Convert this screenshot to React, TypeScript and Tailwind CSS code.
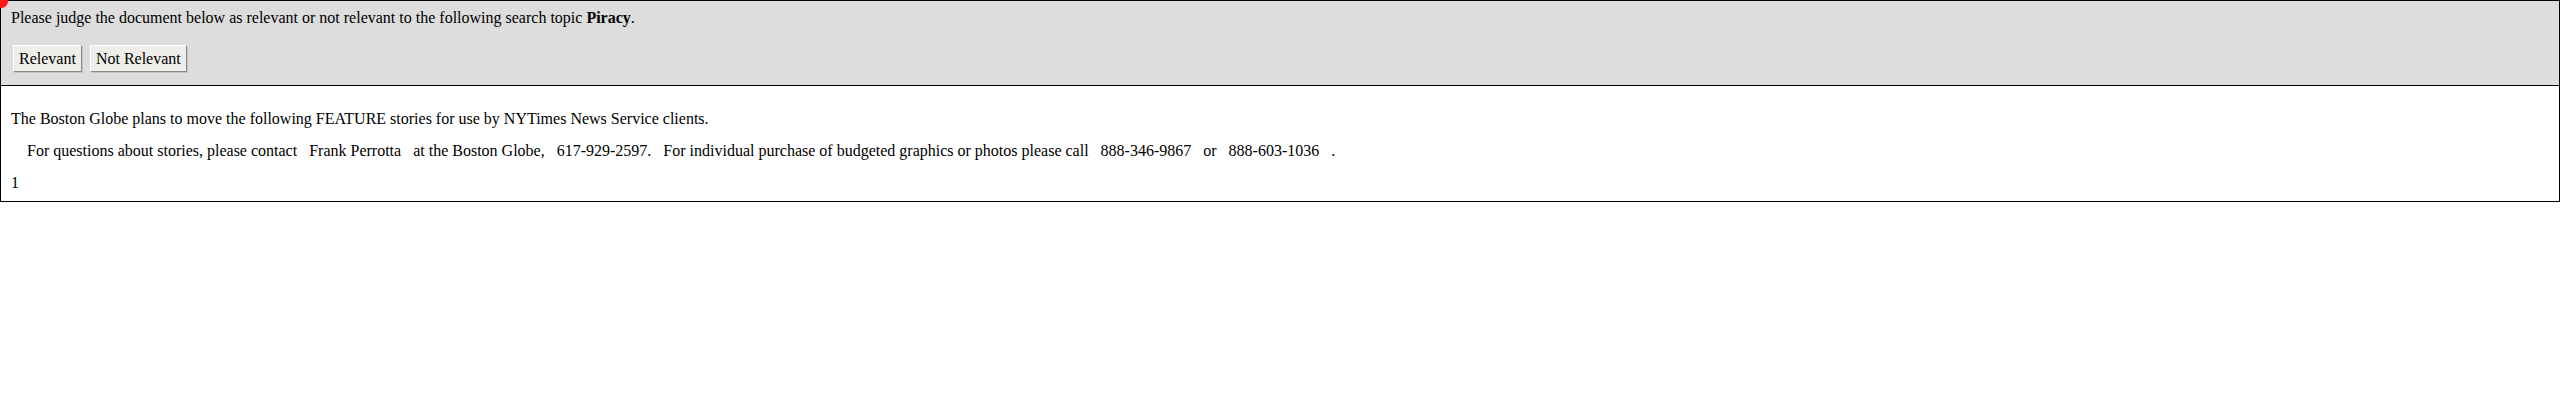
import React from 'react';

const nb = (n: number) => '\u00a0'.repeat(n);

const JudgeButton: React.FC<{ label: string }> = ({ label }) => (
    <button
        type="button"
        className="h-[27px] px-[5px] bg-[#efede9] text-black text-[16px] leading-[18px] border border-t-white border-l-white border-r-[#8a8a8a] border-b-[#8a8a8a] shadow-[1px_1px_0_#c4c4c4]"
    >
        {label}
    </button>
);

const App: React.FC = () => {
    return (
        <div className="relative w-full text-black text-[16px] leading-[18px] font-['Liberation_Serif','Times_New_Roman',serif]">
            <div className="absolute -left-[5px] -top-[5px] w-[13px] h-[13px] rounded-full bg-[#ff1a1a]" />
            <div className="bg-[#dddddd] border border-black pt-[8px] pb-[13px] pl-[10px]">
                <div>
                    Please judge the document below as relevant or not relevant to the following search topic{' '}
                    <b>Piracy</b>.
                </div>
                <div className="mt-[18px] flex gap-[8px] pl-[2px]">
                    <JudgeButton label="Relevant" />
                    <JudgeButton label="Not Relevant" />
                </div>
            </div>
            <div className="bg-white border border-t-0 border-black pt-[24px] pb-[9px] pl-[10px] flex flex-col gap-[14px]">
                <p>The Boston Globe plans to move the following FEATURE stories for use by NYTimes News Service clients.</p>
                <p className="whitespace-pre">
                    {nb(4)}For questions about stories, please contact{nb(3)}Frank Perrotta{nb(3)}at the Boston Globe,{nb(3)}617-929-2597.{nb(3)}For individual purchase of budgeted graphics or photos please call{nb(3)}888-346-9867{nb(3)}or{nb(3)}888-603-1036{nb(3)}.
                </p>
                <p>1</p>
            </div>
        </div>
    );
};

export default App;
